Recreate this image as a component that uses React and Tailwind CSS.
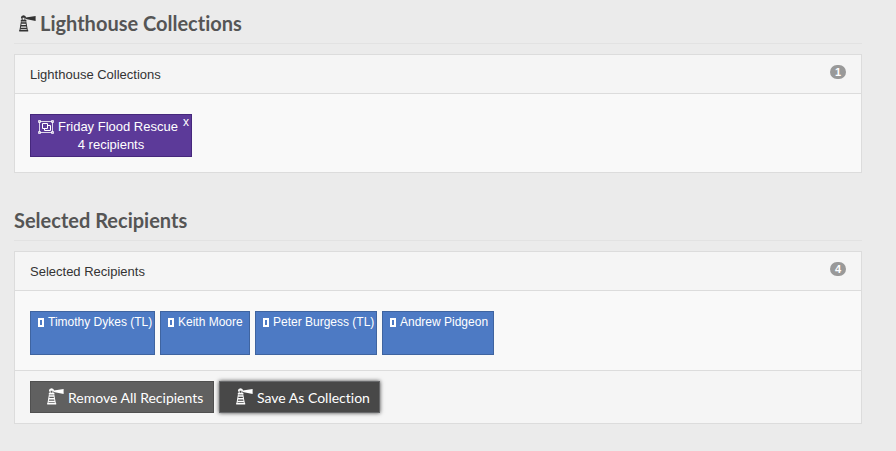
import React from 'react';

function Lighthouse({ className = '' }) {
  return (
    <svg viewBox="0 0 17 17" width="17" height="17" fill="currentColor" aria-hidden="true" className={`shrink-0 ${className}`}>
      <path d="M2 2.6 L2.6 1 L4.6 0.2 L6.4 1 L7 2.6 V3.2 H6.4 V5 H7.4 V6.4 H1.8 V5 H2.6 V3.2 H2 Z M3.6 2.8 V4.8 H5.5 V2.8 Z" fillRule="evenodd" />
      <path d="M6.8 2.5 L16.6 1 V6 L6.8 4 Z" />
      <path d="M2.4 7.2 H6.8 L7.1 8.8 H2.1 Z M1.9 10 H7.3 L7.6 11.6 H1.6 Z M1.4 12.8 H7.8 L8.1 14.2 H1.1 Z" />
      <path d="M2.4 6.6 L0.9 15.5 M6.8 6.6 L8.4 15.5" stroke="currentColor" strokeWidth="1" />
      <path d="M0.2 15 H9.2 V16.5 H0.2 Z" />
    </svg>
  );
}

function GroupIcon() {
  return (
    <svg viewBox="0 0 16 14" width="16" height="14" fill="none" stroke="currentColor" aria-hidden="true">
      <path d="M1.5 1.5 H14.5 V12.5 H1.5 Z" strokeWidth="0.8" />
      <path d="M4.5 3.5 H9.5 V8.5 H4.5 Z M9.5 5.5 H12.5 V10.5 H6.5 V8.5" strokeWidth="1" />
      <path d="M0.5 0.5 H2.5 V2.5 H0.5 Z M13.5 0.5 H15.5 V2.5 H13.5 Z M0.5 11.5 H2.5 V13.5 H0.5 Z M13.5 11.5 H15.5 V13.5 H13.5 Z" strokeWidth="0.8" />
    </svg>
  );
}

function Title({ children }) {
  return (
    <h2 className="flex h-8 items-start border-b border-[#e2e2e2] font-[Lato,sans-serif] text-xl leading-[22px] font-bold text-[#555] [font-variant-ligatures:none]">
      {children}
    </h2>
  );
}

function Panel({ title, count, children, footer }) {
  return (
    <section className="mt-[10px] border border-[#dcdcdc] bg-[#f9f9f9]">
      <header className="flex h-[39px] items-start justify-between border-b border-[#dcdcdc] bg-[#f5f5f5] px-[15px] pt-[10px]">
        <h3 className="leading-5">{title}</h3>
        <span className="h-[14px] w-4 rounded-full bg-[#999] text-center text-[11px] leading-[14px] font-bold text-white">{count}</span>
      </header>
      <div className="px-[15px] pt-5 pb-[15px]">{children}</div>
      {footer && <footer className="flex flex-wrap gap-[5px] border-t border-[#dcdcdc] bg-[#f5f5f5] px-[15px] py-[10px]">{footer}</footer>}
    </section>
  );
}

function ActionButton({ className, children }) {
  return (
    <button type="button" className={`flex h-8 items-start gap-1 border pt-[6px] pl-4 font-[Lato,sans-serif] text-sm leading-5 whitespace-nowrap text-white [font-variant-ligatures:none] ${className}`}>
      <Lighthouse />
      {children}
    </button>
  );
}

const recipients = [
  { name: 'Timothy Dykes (TL)', width: 'w-[125px]' },
  { name: 'Keith Moore', width: 'w-[90px]' },
  { name: 'Peter Burgess (TL)', width: 'w-[122px]' },
  { name: 'Andrew Pidgeon', width: 'w-[112px]' },
];

export default function App() {
  return (
    <main className="min-h-screen bg-[#ebebeb] pt-3 pr-[34px] pb-[27px] pl-[14px] font-['Liberation_Sans',Arial,sans-serif] text-[13px] text-[#333]">
      <Title>
        <Lighthouse className="mt-[3px] mr-1 ml-[5px] text-[#333]" />
        Lighthouse Collections
      </Title>
      <Panel title="Lighthouse Collections" count="1">
        <div className="relative h-[43px] w-[162px] border border-[#46287c] bg-[#5c3a99] pt-[3px] text-center leading-[18px] text-white">
          <div className="flex items-center gap-1 pl-[7px] whitespace-nowrap">
            <GroupIcon />
            Friday Flood Rescue
          </div>
          <div>4 recipients</div>
          <button type="button" aria-label="Remove Friday Flood Rescue" className="absolute top-0 right-[2px] text-xs leading-[14px]">x</button>
        </div>
      </Panel>
      <div className="mt-9">
        <Title>Selected Recipients</Title>
      </div>
      <Panel
        title="Selected Recipients"
        count="4"
        footer={
          <>
            <ActionButton className="w-[184px] border-[#505050] bg-[#606060]">Remove All Recipients</ActionButton>
            <ActionButton className="w-[161px] border-[#68696b] bg-[#484848] shadow-[0_0_4px_#444]">Save As Collection</ActionButton>
          </>
        }
      >
        <ul className="flex flex-wrap gap-[5px]">
          {recipients.map(({ name, width }) => (
            <li key={name} className={`flex h-11 items-start gap-1 border border-[#3f64a0] bg-[#4d7ac4] pt-[2px] pl-[7px] text-xs leading-4 whitespace-nowrap text-white ${width}`}>
              <span className="mt-1 h-[9px] w-[6px] shrink-0 border-2 border-white" />
              {name}
            </li>
          ))}
        </ul>
      </Panel>
    </main>
  );
}
